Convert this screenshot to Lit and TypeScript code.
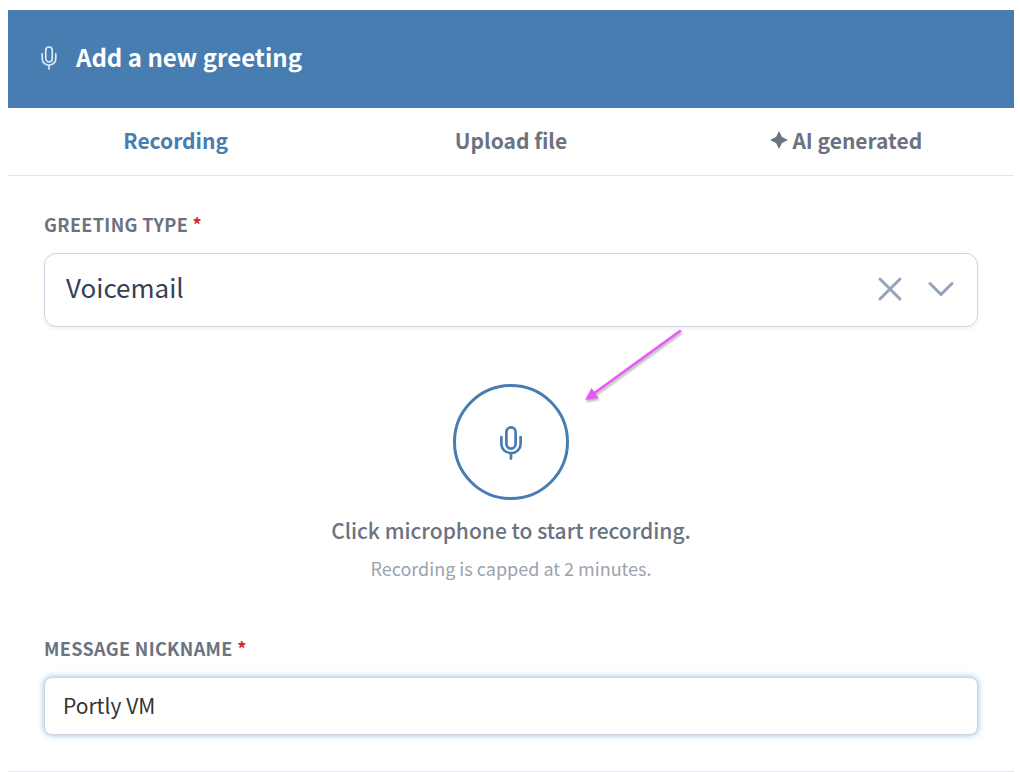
import { LitElement, html, css, svg } from "lit";
import { customElement, property, state } from "lit/decorators.js";

const microphone = svg`
  <rect x="6.400" y="1.400" width="9.200" height="21.200" rx="4.600"></rect>
  <path d="M1.400 11 V18 a9 9 0 0 0 9 9 h1.200 a9 9 0 0 0 9 -9 V11 M11 27 v5.600"></path>`;

@customElement("mic-icon")
class MicIcon extends LitElement {
  static styles = css`
    :host { display: block; }
    svg {
      display: block;
      width: 100%;
      height: 100%;
      fill: none;
      stroke: currentColor;
      stroke-width: var(--mic-stroke, 2.7);
      stroke-linecap: round;
      stroke-linejoin: round;
    }
  `;
  render() {
    return html`<svg viewBox="0 0 22 34" aria-hidden="true">${microphone}</svg>`;
  }
}

@customElement("app-root")
class AppRoot extends LitElement {
  @state() private tab = "recording";
  @property() greeting = "voicemail";

  static styles = css`
    * { box-sizing: border-box; }
    :host {
      display: block;
      min-height: 100vh;
      padding: 10px 6px 0 8px;
      background: #fff;
      color: #6b7280;
      font-family: "Source Sans Pro", "Noto Sans CJK SC", sans-serif;
    }
    button, select, input { font-family: inherit; margin: 0; }
    button { padding: 0; border: 0; background: none; color: inherit; cursor: pointer; }
    h1, p { margin: 0; }

    .header {
      display: flex;
      align-items: center;
      gap: 19px;
      padding: 30px 33px 32px;
      background: #477db1;
      color: #fff;
    }
    .header mic-icon {
      width: 16px;
      height: 24px;
      --mic-stroke: 2.4;
      color: #dce8f4;
    }
    .title { padding-bottom: 2px; font-size: 24px; line-height: 34px; font-weight: 700; }

    .tabs {
      display: grid;
      grid-template-columns: repeat(3, 1fr);
      border-bottom: 1px solid #e5e7eb;
    }
    .tab {
      display: flex;
      align-items: center;
      justify-content: center;
      gap: 4px;
      height: 67px;
      padding-bottom: 3px;
      font-size: 21px;
      font-weight: 700;
    }
    .tab.active { color: #477db1; }
    .spark { width: 18px; height: 18px; fill: currentColor; }

    .form { padding: 34px 36px 36px; border-bottom: 1px solid #e5e7eb; }
    .label {
      display: block;
      font-size: 18px;
      line-height: 28px;
      font-weight: 700;
      letter-spacing: 0.02em;
      text-transform: uppercase;
    }
    .required { color: #dc2626; }
    .picker { position: relative; margin-top: 15px; }
    .select {
      display: block;
      width: 100%;
      height: 74px;
      padding: 0 130px 8px 21px;
      appearance: none;
      border: 1px solid #cbd5e1;
      border-radius: 12px;
      background: #fff;
      box-shadow: 0 2px 4px rgba(15, 23, 42, 0.06);
      color: #334155;
      font-size: 26px;
      outline: none;
    }
    .tools {
      position: absolute;
      inset: 0 23px 2px auto;
      display: flex;
      align-items: center;
      gap: 23px;
      color: #94a3b8;
      pointer-events: none;
    }
    .tools svg {
      display: block;
      width: 28px;
      height: 28px;
      fill: none;
      stroke: currentColor;
      stroke-width: 3;
      stroke-linecap: round;
      stroke-linejoin: round;
    }
    .clear { pointer-events: auto; }

    .recorder {
      position: relative;
      display: flex;
      flex-direction: column;
      align-items: center;
      padding: 57px 0 52px;
      text-align: center;
    }
    .record {
      display: grid;
      place-items: center;
      width: 116px;
      height: 116px;
      padding-top: 2px;
      border: 3px solid #477db1;
      border-radius: 50%;
      color: #477db1;
    }
    .record mic-icon { width: 22px; height: 34px; }
    .prompt { margin-top: 13px; font-size: 21px; line-height: 34px; font-weight: 500; }
    .limit { margin-top: 7px; font-size: 18px; line-height: 28px; color: #9ca3af; }
    .arrow {
      position: absolute;
      top: 0;
      left: 50%;
      width: 180px;
      height: 80px;
      margin-left: 60px;
      pointer-events: none;
      filter: drop-shadow(1px 2px 1px rgba(0, 0, 0, 0.3));
    }

    .input {
      display: block;
      width: 100%;
      height: 58px;
      margin-top: 15px;
      padding: 0 18px 3px;
      border: 1px solid #cbd5e1;
      border-radius: 8px;
      background: #fff;
      box-shadow: 0 0 6px rgba(71, 145, 200, 0.6);
      color: #333;
      font-size: 21px;
      outline: none;
    }
  `;

  private renderTab(id: string, label: unknown) {
    return html`<button
      class="tab ${this.tab === id ? "active" : ""}"
      role="tab"
      aria-selected=${this.tab === id}
      @click=${() => (this.tab = id)}
    >${label}</button>`;
  }

  render() {
    return html`
      <header class="header">
        <mic-icon></mic-icon>
        <h1 class="title">Add a new greeting</h1>
      </header>
      <nav class="tabs" role="tablist">
        ${this.renderTab("recording", "Recording")}
        ${this.renderTab("upload", "Upload file")}
        ${this.renderTab("ai", html`
          <svg class="spark" viewBox="0 0 18 18" aria-hidden="true">
            <path d="M9 0 L12 6 L18 9 L12 12 L9 18 L6 12 L0 9 L6 6 Z"></path>
          </svg><span>AI generated</span>`)}
      </nav>
      <form class="form" @submit=${(e: Event) => e.preventDefault()}>
        <label class="label" for="type">Greeting type <span class="required">*</span></label>
        <div class="picker">
          <select id="type" class="select" required>
            <option value="voicemail" selected>Voicemail</option>
          </select>
          <div class="tools">
            <button class="clear" type="button" aria-label="Clear">
              <svg viewBox="0 0 28 28"><path d="M4 4 L24 24 M24 4 L4 24"></path></svg>
            </button>
            <svg viewBox="0 0 28 28" aria-hidden="true"><path d="M3 8.500 L14 19.500 L25 8.500"></path></svg>
          </div>
        </div>
        <div class="recorder">
          <button class="record" type="button" aria-label="Start recording">
            <mic-icon></mic-icon>
          </button>
          <p class="prompt">Click microphone to start recording.</p>
          <p class="limit">Recording is capped at 2 minutes.</p>
          <svg class="arrow" viewBox="0 0 180 80" aria-hidden="true">
            <path d="M109 4 L22 67" stroke="#e858f5" stroke-width="2.600" stroke-linecap="round"></path>
            <path d="M14 73 L20.500 61 L27.500 71 Z" fill="#e858f5"></path>
          </svg>
        </div>
        <label class="label" for="nickname">Message nickname <span class="required">*</span></label>
        <input id="nickname" class="input" type="text" .value=${"Portly VM"} required />
      </form>
    `;
  }
}
